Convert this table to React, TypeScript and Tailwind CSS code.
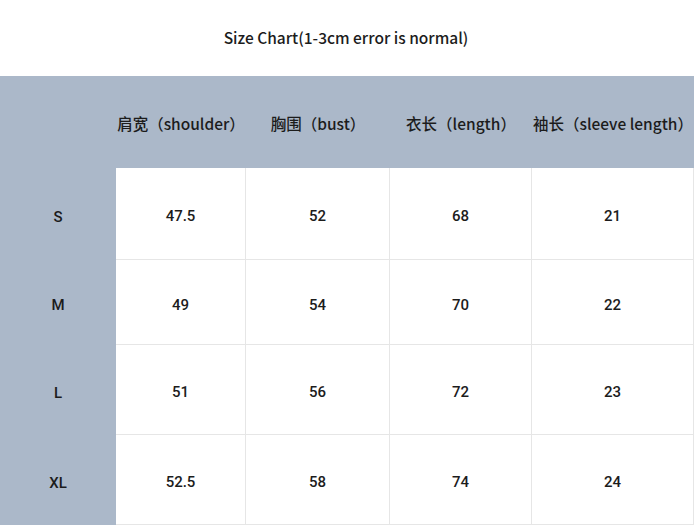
const rows = [
  { size: "S", values: ["47.5", "52", "68", "21"], h: "h-[92px]" },
  { size: "M", values: ["49", "54", "70", "22"], h: "h-[85px]" },
  { size: "L", values: ["51", "56", "72", "23"], h: "h-[90px]" },
  { size: "XL", values: ["52.5", "58", "74", "24"], h: "h-[90px]" },
]

const headers = ["肩宽（shoulder）", "胸围（bust）", "衣长（length）", "袖长（sleeve length）"]

export default function App() {
  return (
    <div className="w-[696px] h-[526px] overflow-hidden bg-white text-[#1c1c1c] font-['Noto_Sans_CJK_SC',sans-serif]">
      {/* Title */}
      <div className="h-[76px] flex items-center justify-center pr-[4px]">
        <p className="text-[15.5px] font-medium">Size Chart(1-3cm error is normal)</p>
      </div>

      <div className="w-[694px] grid grid-cols-[116px_130px_144px_142px_162px]">
        {/* Header band */}
        <div className="h-[92px] bg-[#abb8c9]" />
        {headers.map((h) => (
          <div key={h} className="h-[92px] bg-[#abb8c9] flex items-center justify-center pt-[3px]">
            <span className="text-[15.5px] font-medium whitespace-nowrap">{h}</span>
          </div>
        ))}

        {/* Data rows */}
        {rows.map((row) => (
          <div key={row.size} className="contents">
            <div className={`${row.h} bg-[#abb8c9] flex items-center justify-center pt-[6px]`}>
              <span className="text-[15px] font-medium font-['Roboto',sans-serif]">{row.size}</span>
            </div>
            {row.values.map((v, i) => (
              <div
                key={i}
                className={`${row.h} border-r border-b border-[#e6e6e6] flex items-center justify-center pt-[6px]`}
              >
                <span className="text-[15px] font-medium font-['Roboto',sans-serif]">{v}</span>
              </div>
            ))}
          </div>
        ))}
      </div>
    </div>
  )
}
